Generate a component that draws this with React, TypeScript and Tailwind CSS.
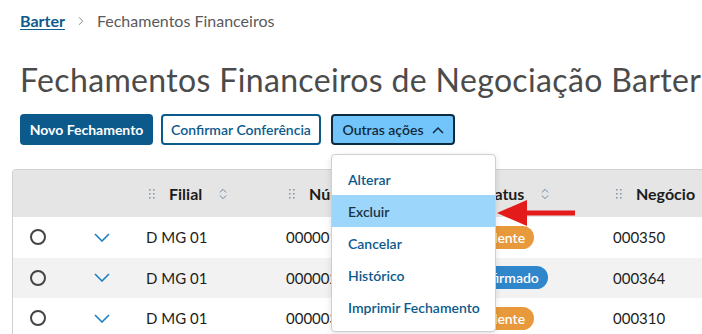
import { ChevronRight, ChevronsUpDown } from "lucide-react";

const rows = [
  { filial: "D MG 01", num: "000001", status: "Pendente", negocio: "000350", alt: false },
  { filial: "D MG 01", num: "000002", status: "Confirmado", negocio: "000364", alt: true },
  { filial: "D MG 01", num: "000003", status: "Pendente", negocio: "000310", alt: false },
];

const cols = "grid grid-cols-[50px_67px_140px_171px_156px_200px]";

function Grip() {
  return (
    <svg width="6" height="10" viewBox="0 0 6 10" className="shrink-0">
      {[0, 4, 8].map((y) =>
        [0, 4].map((x) => <rect key={`${x}-${y}`} x={x} y={y} width="1.6" height="1.6" fill="#8a9aa8" />)
      )}
    </svg>
  );
}

function HeaderCell({ label }: { label: string }) {
  return (
    <div className="flex items-center pl-[19px]">
      <Grip />
      <span className="ml-[14px] text-[16px] font-bold text-[#1c1c1c]">{label}</span>
      <ChevronsUpDown className="ml-[14px] h-[14px] w-[14px] text-[#5a7a95]" strokeWidth={1.5} />
    </div>
  );
}

function Badge({ status }: { status: string }) {
  const pending = status === "Pendente";
  return (
    <span
      className={`inline-flex h-[23px] items-center rounded-full px-[9px] text-[14px] font-semibold text-white ${
        pending ? "bg-[#e8993b]" : "bg-[#2f86cb]"
      }`}
    >
      {status}
    </span>
  );
}

export default function App() {
  return (
    <div className="relative h-[334px] w-[702px] overflow-hidden bg-white font-['Lato',sans-serif]">
      <nav className="flex items-center pl-5 pt-[9px] text-[16px]">
        <a className="font-bold text-[#0d5b8e] underline underline-offset-2">Barter</a>
        <ChevronRight className="mx-[9px] h-[14px] w-[14px] text-[#777]" strokeWidth={1.5} />
        <span className="text-[#5a5a5a]">Fechamentos Financeiros</span>
      </nav>

      <h1 className="mt-[27px] whitespace-nowrap pl-5 text-[32px] leading-[40px] tracking-[0.35px] text-[#4b4b4b]">
        Fechamentos Financeiros de Negociação Barter
      </h1>

      <div className="mt-[14px] flex gap-2 pl-5">
        <button className="h-[31px] w-[133px] rounded-[4px] bg-[#0c5a8c] text-[14px] font-bold text-white">
          Novo Fechamento
        </button>
        <button className="h-[31px] w-[160px] rounded-[4px] border-2 border-[#0c5a8c] bg-white text-[14px] font-semibold text-[#0c5a8c]">
          Confirmar Conferência
        </button>
        <button className="ml-[2px] flex h-[31px] w-[124px] items-center justify-center gap-[8px] rounded-[4px] border-2 border-[#0d2b40] bg-[#72c5fa] text-[14px] font-semibold text-[#15283a]">
          Outras ações
          <svg width="12" height="8" viewBox="0 0 12 8" fill="none" stroke="currentColor" strokeWidth="1.5">
            <path d="M1 7 L6 2 L11 7" />
          </svg>
        </button>
      </div>

      <div className="ml-3 mt-[24px] w-[800px] rounded-tl-[4px] border-l border-t border-[#d0d0d0]">
        <div className={`${cols} h-[47px] bg-[#e5e5e5]`}>
          <div />
          <div />
          <HeaderCell label="Filial" />
          <HeaderCell label="Número" />
          <HeaderCell label="Status" />
          <HeaderCell label="Negócio" />
        </div>
        {rows.map((r, i) => (
          <div
            key={i}
            className={`${cols} h-[40.5px] items-center text-[15px] text-[#1c1c1c] ${r.alt ? "bg-[#f2f2f2]" : "bg-white"}`}
          >
            <div className="flex justify-center">
              <span className="h-[16px] w-[16px] rounded-full border-2 border-[#444]" />
            </div>
            <div className="flex justify-center pl-[10px]">
              <svg width="16" height="9" viewBox="0 0 16 9" fill="none" stroke="#1b80c2" strokeWidth="1.6">
                <path d="M1 1 L8 8 L15 1" />
              </svg>
            </div>
            <div className="pl-4">{r.filial}</div>
            <div className="pl-4">{r.num}</div>
            <div className="pl-4">
              <Badge status={r.status} />
            </div>
            <div className="pl-4">{r.negocio}</div>
          </div>
        ))}
      </div>

      <ul className="absolute left-[331px] top-[154px] w-[165px] rounded-[4px] border border-[#cfcfcf] bg-white py-[8px] text-[14px] font-semibold text-[#0c5a8c] shadow-[0_2px_6px_rgba(0,0,0,0.12)]">
        {["Alterar", "Excluir", "Cancelar", "Histórico", "Imprimir Fechamento"].map((item) => (
          <li
            key={item}
            className={`flex h-[32px] items-center whitespace-nowrap px-4 ${
              item === "Excluir" ? "bg-[#9dd6fb] text-[#1b3547]" : ""
            }`}
          >
            {item}
          </li>
        ))}
      </ul>

      <svg className="absolute left-[497px] top-[199px]" width="80" height="28" viewBox="0 0 80 28">
        <polygon points="0,14 30,1 30,27" fill="#e31b1b" />
        <rect x="29" y="11.5" width="49" height="5" fill="#e31b1b" />
      </svg>
    </div>
  );
}
